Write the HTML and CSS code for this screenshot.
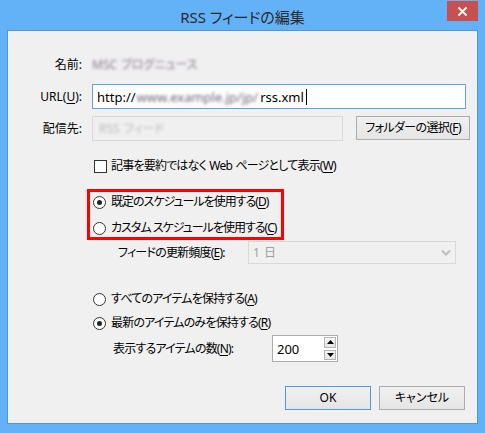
FILE: index.html
```html
<!DOCTYPE html>
<html lang="ja">
<head>
<meta charset="utf-8">
<title>RSS フィードの編集</title>
<link rel="stylesheet" href="styles.css">
</head>
<body>
<div class="window">
  <div class="titlebar">
    <span></span>
    <div class="title">RSS フィードの編集</div>
    <div class="close"><svg width="31" height="20" viewBox="0 0 31 20"><path d="M11.5 6.5 L19.5 14.5 M19.5 6.5 L11.5 14.5" stroke="#fff" stroke-width="1.8" fill="none"/></svg></div>
  </div>
  <div class="client">
    <div class="form">
      <div class="lbl">名前:</div>
      <div class="val"><span class="mosaic name">MSC ブログニュース</span></div>
      <div class="lbl">URL(<u>U</u>):</div>
      <div class="field">
        <div class="input url"><span>http://</span><span class="mosaic urlpart">www.example.jp/jp/</span><span>rss.xml</span><span class="caret"></span></div>
      </div>
      <div class="lbl">配信先:</div>
      <div class="field row3">
        <div class="input disabled"><span class="mosaic light">RSS フィード</span></div>
        <button class="btn folder">フォルダーの選択(<u>F</u>)</button>
      </div>
    </div>

    <div class="check"><span class="box"></span><span>記事を要約ではなく Web ページとして表示(<u>W</u>)</span></div>

    <div class="redbox">
      <div class="radio"><span class="dot on"></span><span>既定のスケジュールを使用する(<u>D</u>)</span></div>
      <div class="radio second"><span class="dot"></span><span>カスタム スケジュールを使用する(<u>C</u>)</span></div>
    </div>

    <div class="freq">
      <span class="freqlbl">フィードの更新頻度(<u>E</u>):</span>
      <div class="select"><span>1 日</span><svg width="10" height="8" viewBox="0 0 10 8"><path d="M1 1.5 L5 5.5 L9 1.5" stroke="#bdbdbd" stroke-width="2" fill="none"/></svg></div>
    </div>

    <div class="radio keepall"><span class="dot"></span><span>すべてのアイテムを保持する(<u>A</u>)</span></div>
    <div class="radio keeprecent"><span class="dot on"></span><span>最新のアイテムのみを保持する(<u>R</u>)</span></div>

    <div class="count">
      <span class="countlbl">表示するアイテムの数(<u>N</u>):</span>
      <div class="spin">
        <span class="spinval">200</span>
        <div class="spinbtns">
          <span class="sb"><svg width="7" height="4" viewBox="0 0 7 4"><path d="M0 4 L3.5 0 L7 4 Z" fill="#000"/></svg></span>
          <span class="sb"><svg width="7" height="4" viewBox="0 0 7 4"><path d="M0 0 L7 0 L3.5 4 Z" fill="#000"/></svg></span>
        </div>
      </div>
    </div>

    <div class="buttons">
      <button class="btn ok">OK</button>
      <button class="btn">キャンセル</button>
    </div>
  </div>
</div>
</body>
</html>
```

FILE: styles.css
```css
* { box-sizing: border-box; }
html, body { margin: 0; padding: 0; }
body {
  width: 485px;
  height: 433px;
  overflow: hidden;
  font-family: "Noto Sans", "Noto Sans CJK JP", sans-serif;
  font-feature-settings: "palt";
  font-size: 12px;
  line-height: 16px;
  letter-spacing: -0.8px;
  word-spacing: 1px;
  color: #000;
  white-space: nowrap;
}
u { text-decoration: underline; text-underline-offset: 2px; }

.window {
  width: 485px;
  height: 433px;
  background: #63b1f7;
  padding: 0 7px 9px 7px;
  display: flex;
  flex-direction: column;
}
.titlebar {
  height: 30px;
  flex: none;
  display: grid;
  grid-template-columns: 1fr auto 1fr;
  align-items: start;
}
.title {
  font-size: 15px;
  line-height: 20px;
  margin-top: 7px;
  letter-spacing: 0;
  word-spacing: 0;
  color: #2b2b2b;
}
.close {
  justify-self: end;
  width: 31px;
  height: 20px;
  margin-top: 1px;
  background: #c75050;
}
.close svg { display: block; }

.client {
  flex: 1;
  background: #f0f0f0;
  border: 1px solid #4d96dc;
  display: flex;
  flex-direction: column;
}

.form {
  display: grid;
  grid-template-columns: 74px 1fr;
  grid-template-rows: 24px 25px 25px;
  column-gap: 10px;
  row-gap: 7px;
  margin-top: 22px;
}
.lbl { text-align: right; align-self: center; letter-spacing: 0; }
.val { align-self: center; }
.field { display: flex; align-items: stretch; }

.input {
  height: 25px;
  border: 1px solid #abadb3;
  background: #fff;
  display: flex;
  align-items: center;
  padding-left: 4px;
}
.url { width: 374px; border-color: #5fa2e8; font-size: 13px; letter-spacing: 0; word-spacing: 0; }
.disabled { width: 251px; border-color: #d9d9d9; background: #f0f0f0; padding-left: 6px; }
.caret { display: inline-block; width: 1px; height: 16px; background: #000; margin-left: 2px; }

.mosaic { filter: blur(1.4px); letter-spacing: 0; }
.name { color: #8a7b8f; }
.urlpart { color: #6e6378; margin: 0 2px 0 1px; }
.light { color: #b8b8b8; }

.btn {
  font: inherit;
  font-feature-settings: "palt";
  letter-spacing: -0.6px;
  color: #000;
  height: 24px;
  padding: 0;
  border: 1px solid #acacac;
  background: linear-gradient(#f0f0f0, #e5e5e5);
  border-radius: 0;
}
.folder { width: 114px; margin-left: 13px; }

.check {
  display: flex;
  align-items: center;
  gap: 4px;
  height: 18px;
  margin: 16px 0 0 86px;
}
.box {
  width: 13px;
  height: 13px;
  border: 1px solid #333;
  background: #fff;
  flex: none;
}

.redbox {
  width: 197px;
  margin: 14px 0 0 79px;
  border: 3px solid #ff0000;
  padding: 1px 0 0 3px;
  letter-spacing: -1px;
  word-spacing: 0;
}
.radio {
  display: flex;
  align-items: center;
  gap: 5px;
  height: 18px;
}
.radio.second { margin-top: 8px; }
.dot {
  width: 13px;
  height: 13px;
  border: 1px solid #333;
  border-radius: 50%;
  background: #fff;
  flex: none;
  display: flex;
  align-items: center;
  justify-content: center;
}
.dot.on::after {
  content: "";
  width: 5px;
  height: 5px;
  border-radius: 50%;
  background: #222;
}

.freq {
  display: flex;
  align-items: center;
  height: 23px;
  margin: 1px 0 0 110px;
}
.freqlbl { width: 130px; }
.select {
  width: 208px;
  height: 23px;
  border: 1px solid #d9d9d9;
  background: #f0f0f0;
  color: #a0a0a0;
  display: flex;
  align-items: center;
  justify-content: space-between;
  padding: 0 4px;
  letter-spacing: 0;
}

.keepall { margin: 26px 0 0 85px; }
.keeprecent { margin: 6px 0 0 85px; }

.count {
  display: flex;
  align-items: center;
  height: 27px;
  margin: 3px 0 0 105px;
}
.countlbl { width: 159px; }
.spin {
  width: 66px;
  height: 27px;
  border: 1px solid #acacac;
  background: #fff;
  display: flex;
  align-items: center;
  justify-content: space-between;
  padding-left: 4px;
}
.spinval { font-size: 13px; letter-spacing: 0; }
.spinbtns {
  display: flex;
  flex-direction: column;
  gap: 2px;
  padding: 1px 1px 1px 0;
  height: 100%;
}
.sb {
  width: 12px;
  flex: 1;
  border: 1px solid #b4b4b4;
  background: linear-gradient(#f4f4f4, #e6e6e6);
  display: flex;
  align-items: center;
  justify-content: center;
}
.sb svg { display: block; }

.buttons {
  display: flex;
  justify-content: flex-end;
  gap: 8px;
  margin-top: 24px;
  padding-right: 12px;
}
.buttons .btn { width: 86px; letter-spacing: 0; }
.ok { border-color: #4a9ae8; }
```
